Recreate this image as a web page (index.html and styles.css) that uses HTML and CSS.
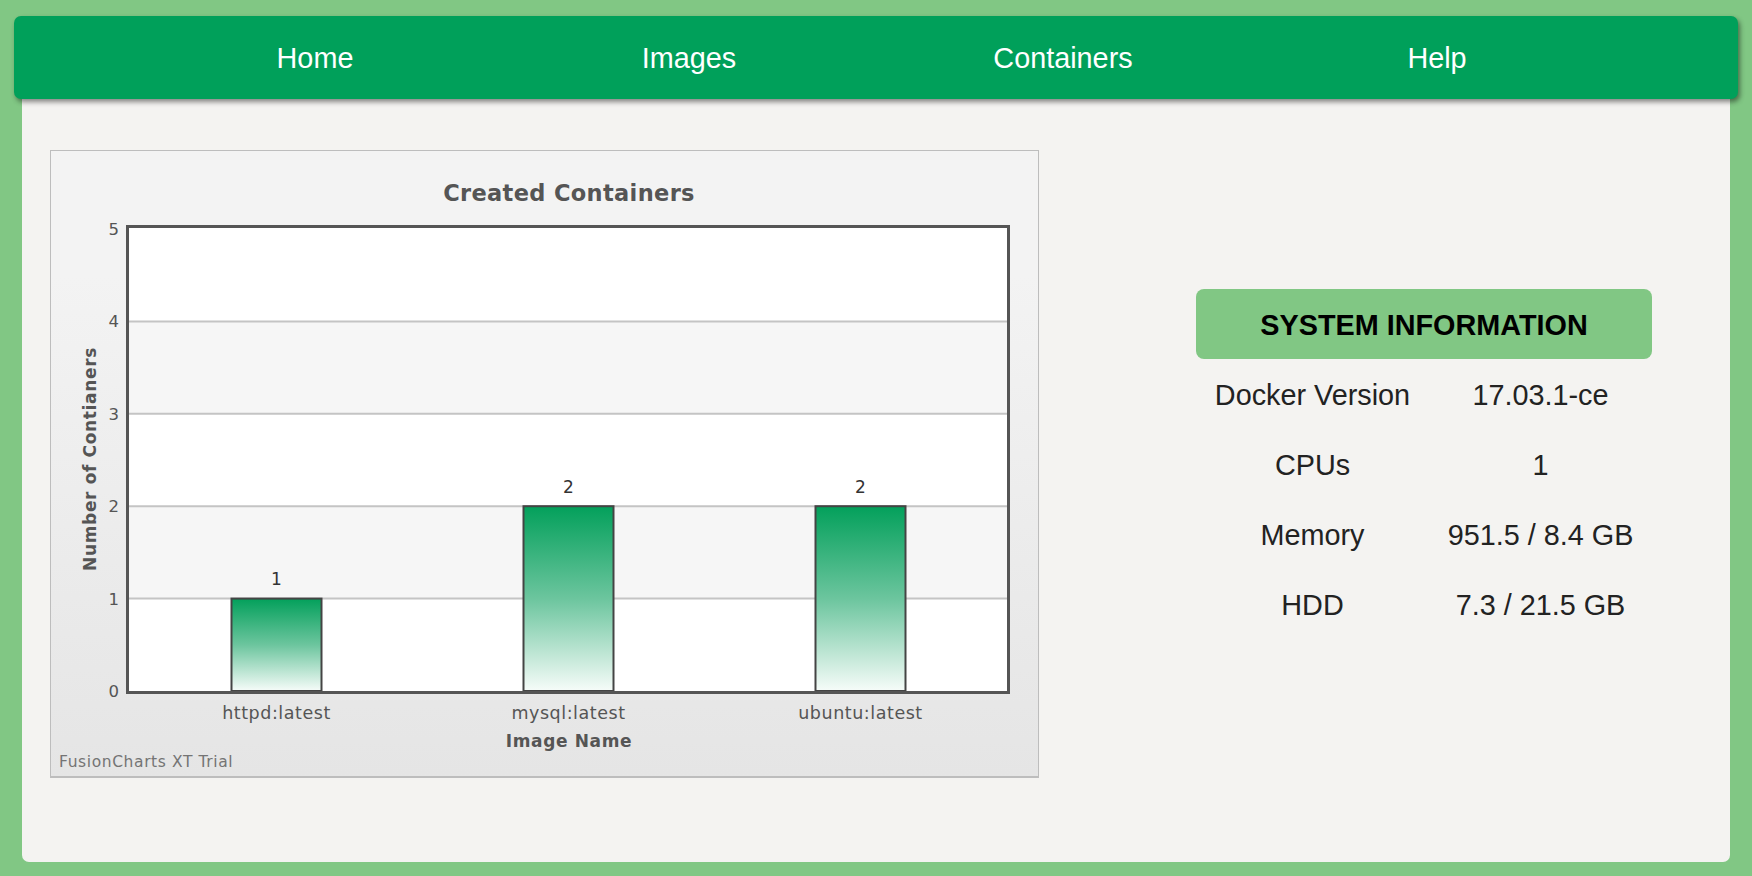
FILE: index.html
```html
<!DOCTYPE html>
<html lang="en">
<head>
<meta charset="utf-8">
<title>Docker Dashboard</title>
<link rel="stylesheet" href="styles.css">
</head>
<body>
<nav class="topnav">
  <a class="nav-item" href="#">Home</a>
  <a class="nav-item" href="#">Images</a>
  <a class="nav-item" href="#">Containers</a>
  <a class="nav-item" href="#">Help</a>
</nav>
<main class="panel">
  <section class="chart-box">
    <svg class="chart" viewBox="52 152 985 625" width="985" height="625" xmlns="http://www.w3.org/2000/svg">
      <defs>
        <linearGradient id="barGrad" x1="0" y1="0" x2="0" y2="1">
          <stop offset="0" stop-color="#03a05b"/>
          <stop offset="0.5" stop-color="#6cc59e"/>
          <stop offset="1" stop-color="#f6fcf9"/>
        </linearGradient>
      </defs>
      <text class="c-title" x="570" y="201.5">Created Containers</text>
      <rect x="130" y="229" width="878" height="463" fill="#ffffff"/>
      <rect x="130" y="322.4" width="878" height="92.4" fill="#f6f6f6"/>
      <rect x="130" y="507.2" width="878" height="92.4" fill="#f6f6f6"/>
      <g class="grid">
        <line x1="130" y1="322.4" x2="1008" y2="322.4"/>
        <line x1="130" y1="414.8" x2="1008" y2="414.8"/>
        <line x1="130" y1="507.2" x2="1008" y2="507.2"/>
        <line x1="130" y1="599.6" x2="1008" y2="599.6"/>
      </g>
      <g class="bars">
        <rect x="232.5" y="599.6" width="90" height="92.4"/>
        <rect x="524.5" y="507.2" width="90" height="184.8"/>
        <rect x="816.5" y="507.2" width="90" height="184.8"/>
      </g>
      <rect class="plot-border" x="128.5" y="227.5" width="881" height="466"/>
      <g class="y-labels">
        <text x="120" y="236">5</text>
        <text x="120" y="328.4">4</text>
        <text x="120" y="420.8">3</text>
        <text x="120" y="513.2">2</text>
        <text x="120" y="605.6">1</text>
        <text x="120" y="698">0</text>
      </g>
      <g class="v-labels">
        <text x="277.5" y="585.5">1</text>
        <text x="569.5" y="493.5">2</text>
        <text x="861.5" y="493.5">2</text>
      </g>
      <g class="x-labels">
        <text x="277.5" y="719.5">httpd:latest</text>
        <text x="569.5" y="719.5">mysql:latest</text>
        <text x="861.5" y="719.5">ubuntu:latest</text>
      </g>
      <text class="axis-title" x="570" y="748">Image Name</text>
      <text class="axis-title" x="97" y="460" transform="rotate(-90 97 460)">Number of Contianers</text>
      <text class="trial" x="60" y="768">FusionCharts XT Trial</text>
    </svg>
  </section>
  <section class="sysinfo">
    <h2 class="sysinfo-head">SYSTEM INFORMATION</h2>
    <table class="sysinfo-table">
      <tr><td class="k">Docker Version</td><td class="v">17.03.1-ce</td></tr>
      <tr><td class="k">CPUs</td><td class="v">1</td></tr>
      <tr><td class="k">Memory</td><td class="v">951.5 / 8.4 GB</td></tr>
      <tr><td class="k">HDD</td><td class="v">7.3 / 21.5 GB</td></tr>
    </table>
  </section>
</main>
</body>
</html>
```
FILE: styles.css
```css
* { box-sizing: border-box; }
html, body {
  margin: 0;
  padding: 0;
}
body {
  background: #81c784;
  font-family: "Liberation Sans", Arial, Helvetica, sans-serif;
  width: 1752px;
  height: 876px;
  overflow: hidden;
  padding-top: 16px;
}
.topnav {
  position: relative;
  z-index: 2;
  margin: 0 14px;
  height: 83px;
  background: #00a05a;
  border-radius: 7px;
  box-shadow: 2px 3px 5px rgba(0, 0, 0, 0.45);
  display: flex;
  justify-content: center;
  align-items: center;
}
.nav-item {
  width: 374px;
  text-align: center;
  color: #ffffff;
  text-decoration: none;
  font-size: 28.8px;
  line-height: 34px;
  padding-top: 1px;
}
.panel {
  margin: 0 22px;
  height: 763px;
  background: #f4f3f1;
  border-radius: 0 0 7px 7px;
  padding: 51px 0 0 28px;
  display: flex;
  align-items: flex-start;
}
.chart-box {
  width: 989px;
  height: 628px;
  border: 1.5px solid #bdbdbd;
  border-bottom-width: 2.5px;
  background: linear-gradient(to bottom, #f3f3f3 0%, #f3f3f3 20%, #e5e5e5 100%);
  flex: none;
}
.chart {
  display: block;
  width: 985px;
  height: 625px;
}
.chart text {
  font-family: "DejaVu Sans", Verdana, sans-serif;
}
.c-title {
  font-size: 22.5px;
  font-weight: bold;
  fill: #555555;
  text-anchor: middle;
  letter-spacing: 0.35px;
}
.grid line {
  stroke: #c4c4c4;
  stroke-width: 2;
}
.bars rect {
  fill: url(#barGrad);
  stroke: #444444;
  stroke-width: 2;
}
.plot-border {
  fill: none;
  stroke: #555555;
  stroke-width: 3;
}
.y-labels text {
  font-size: 16.5px;
  fill: #555555;
  text-anchor: end;
}
.v-labels text {
  font-size: 17px;
  fill: #333333;
  text-anchor: middle;
}
.x-labels text {
  font-size: 17.5px;
  fill: #555555;
  text-anchor: middle;
  letter-spacing: 0.55px;
}
.axis-title {
  font-size: 17px;
  font-weight: bold;
  fill: #555555;
  text-anchor: middle;
  letter-spacing: 0.65px;
}
.trial {
  font-size: 15.5px;
  fill: #747474;
  letter-spacing: 0.6px;
}
.sysinfo {
  margin-left: 157px;
  margin-top: 139px;
  width: 456px;
  flex: none;
}
.sysinfo-head {
  margin: 0;
  height: 70px;
  background: #81c784;
  border-radius: 8px;
  color: #000000;
  font-size: 28.8px;
  font-weight: bold;
  text-align: center;
  line-height: 70px;
  padding-top: 1px;
}
.sysinfo-table {
  width: 456px;
  border-collapse: collapse;
  table-layout: fixed;
}
.sysinfo-table td {
  height: 70px;
  padding: 3px 0 0 0;
  text-align: center;
  vertical-align: middle;
  font-size: 28.8px;
  color: #222222;
}
.sysinfo-table .k { width: 233px; }
.sysinfo-table .v { width: 223px; }
```
